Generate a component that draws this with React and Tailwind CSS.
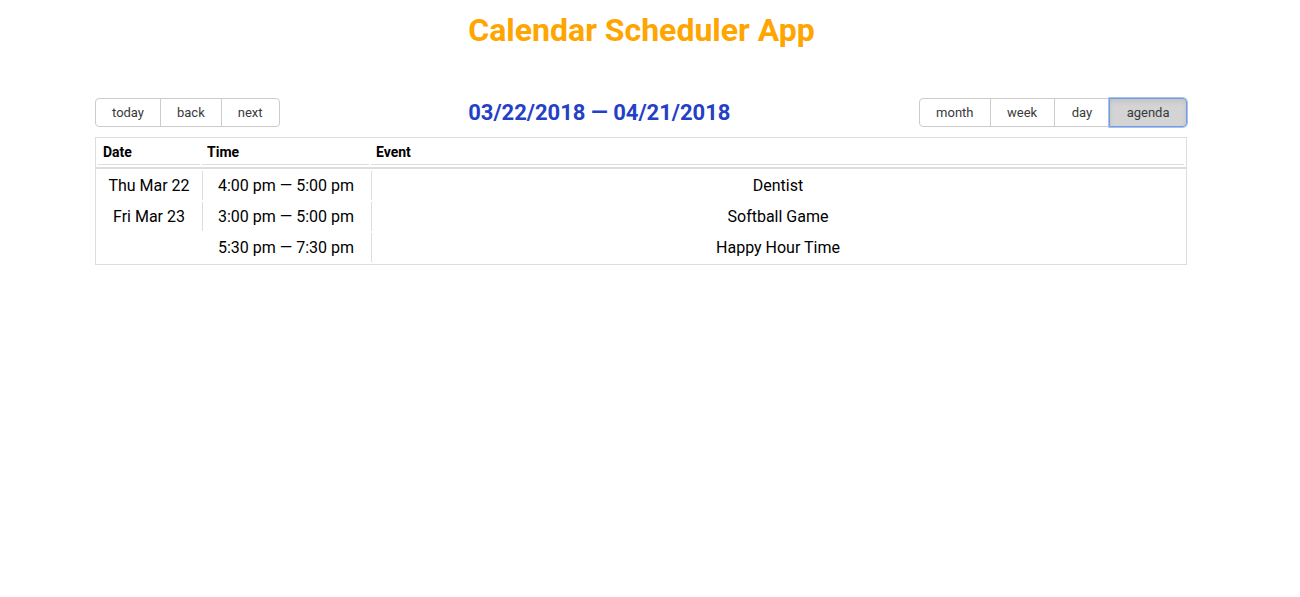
import React from 'react';

const rows = [
  { date: 'Thu Mar 22', time: '4:00 pm — 5:00 pm', title: 'Dentist' },
  { date: 'Fri Mar 23', time: '3:00 pm — 5:00 pm', title: 'Softball Game' },
  { date: null, time: '5:30 pm — 7:30 pm', title: 'Happy Hour Time' },
];

const btn = 'h-[29px] px-4 border border-[#ccc] text-[13px] text-[#373a3c] bg-white -ml-px first:ml-0';

const App = () => {
  return (
    <div className="w-[1283px] min-h-[597px] bg-white text-black" style={{ fontFamily: "Roboto, 'Noto Sans', sans-serif" }}>
      {/* Title */}
      <h1 className="pt-[12px] text-center text-[32px] font-bold leading-[37px] text-[#ffa500]">
        Calendar Scheduler App
      </h1>

      <div className="ml-[95px] mr-[96px] mt-[49px]">
        {/* Toolbar */}
        <div className="flex items-center h-[29px] mb-[10px]">
          <div className="flex">
            <button className={`${btn} rounded-l-[4px]`}>today</button>
            <button className={btn}>back</button>
            <button className={`${btn} rounded-r-[4px]`}>next</button>
          </div>
          <div className="flex-1 text-center text-[22px] font-bold text-[#2441c6]">
            03/22/2018 — 04/21/2018
          </div>
          <div className="flex">
            <button className={`${btn} rounded-l-[4px]`}>month</button>
            <button className={`${btn} px-[16.5px]`}>week</button>
            <button className={`${btn} px-[17px]`}>day</button>
            <button className="relative h-[29px] px-[16.5px] -ml-px border border-[#6f9ce6] outline outline-1 outline-[#a9c3ee] rounded-r-[4px] text-[13px] text-[#373a3c] bg-[#d4d4d4] shadow-[inset_0_3px_5px_rgba(0,0,0,0.08)]">
              agenda
            </button>
          </div>
        </div>

        {/* Agenda */}
        <div className="border border-[#ddd]">
          <div className="flex gap-[2px] p-[2px]">
            <div className="w-[102px] h-[25px] border-b border-[#ddd] pl-[5px] text-[14px] font-bold leading-[24px]">Date</div>
            <div className="w-[167px] h-[25px] border-b border-[#ddd] pl-[5px] text-[14px] font-bold leading-[24px]">Time</div>
            <div className="flex-1 h-[25px] border-b border-[#ddd] pl-[5px] text-[14px] font-bold leading-[24px]">Event</div>
          </div>
          <div className="h-[2px] bg-[#ddd]" />
          <div className="flex flex-col gap-[2px] p-[2px] text-[16px]">
            {rows.map((r, i) => (
              <div key={i} className="flex gap-[2px] h-[29px]">
                <div className="w-[102px] text-center leading-[29px]">{r.date}</div>
                <div className={`w-[167px] text-center leading-[29px] ${r.date ? 'border-l border-[#ddd]' : 'border-l border-transparent'}`}>
                  {r.time}
                </div>
                <div className="flex-1 text-center leading-[29px] border-l border-[#ddd]">{r.title}</div>
              </div>
            ))}
          </div>
        </div>
      </div>
    </div>
  );
};

export default App;
